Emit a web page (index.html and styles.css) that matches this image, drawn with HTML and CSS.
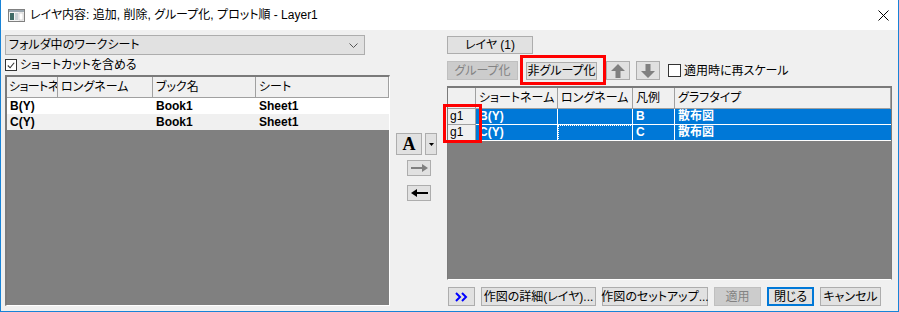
FILE: index.html
```html
<!DOCTYPE html>
<html lang="ja">
<head>
<meta charset="utf-8">
<title>レイヤ内容</title>
<link rel="stylesheet" href="styles.css">
</head>
<body>
<div class="window">
  <div class="titlebar">
    <svg class="app-icon" width="17" height="13" viewBox="0 0 17 13">
      <rect x="0.5" y="0.5" width="16" height="12" fill="#f4f4f4" stroke="#808080"/>
      <rect x="1" y="1" width="15" height="2" fill="#9aa7b0"/>
      <rect x="2" y="4" width="4" height="7" fill="#3f6b66"/>
      <rect x="7" y="4" width="3" height="7" fill="#c9d2d6"/>
      <rect x="11" y="4" width="4" height="7" fill="#ffffff" stroke="#b5b5b5" stroke-width="0.5"/>
    </svg>
    <span class="title">レイヤ内容: 追加, 削除, グループ化, プロット順 - Layer1</span>
    <svg class="close" width="11" height="11" viewBox="0 0 11 11">
      <path d="M0.5 0.5 L10.5 10.5 M10.5 0.5 L0.5 10.5" stroke="#000" stroke-width="1" fill="none"/>
    </svg>
  </div>

  <div class="content">
    <div class="left">
      <div class="combo">
        <span>フォルダ中のワークシート</span>
        <svg width="9" height="5" viewBox="0 0 9 5"><path d="M0.5 0.5 L4.5 4.5 L8.5 0.5" stroke="#555" fill="none"/></svg>
      </div>
      <div class="check-row">
        <span class="checkbox"><svg width="11" height="11" viewBox="0 0 11 11"><path d="M2 5.5 L4.5 8 L9 2.5" stroke="#333" stroke-width="1.2" fill="none"/></svg></span>
        <span>ショートカットを含める</span>
      </div>
      <div class="list">
        <div class="lrow lhead">
          <div class="hcell tight">ショートネ</div>
          <div class="hcell">ロングネーム</div>
          <div class="hcell">ブック名</div>
          <div class="hcell">シート</div>
        </div>
        <div class="lrow ldata">
          <div class="dcell">B(Y)</div>
          <div class="dcell"></div>
          <div class="dcell">Book1</div>
          <div class="dcell">Sheet1</div>
        </div>
        <div class="lrow ldata alt">
          <div class="dcell">C(Y)</div>
          <div class="dcell"></div>
          <div class="dcell">Book1</div>
          <div class="dcell">Sheet1</div>
        </div>
      </div>
    </div>

    <div class="middle">
      <div class="font-row">
        <div class="btn font-btn">A</div>
        <div class="btn dd-btn"><svg width="5" height="3" viewBox="0 0 5 3"><path d="M0 0 H5 L2.5 3 Z" fill="#000"/></svg></div>
      </div>
      <div class="btn arrow-btn first">
        <svg width="17" height="8" viewBox="0 0 17 8"><path d="M0 3 H11 V0 L17 4 L11 8 V5 H0 Z" fill="#808080"/></svg>
      </div>
      <div class="btn arrow-btn">
        <svg width="17" height="8" viewBox="0 0 17 8"><path d="M17 3 H6 V0 L0 4 L6 8 V5 H17 Z" fill="#000"/></svg>
      </div>
    </div>

    <div class="right">
      <div class="btn tab-btn">レイヤ (1)</div>
      <div class="tool-row">
        <div class="btn disabled group-btn">グループ化</div>
        <div class="btn ungroup-btn">非グループ化</div>
        <div class="btn move-btn"><svg width="14" height="14" viewBox="0 0 14 14"><path d="M7 0 L14 7 H9.5 V14 H4.5 V7 H0 Z" fill="#808080"/></svg></div>
        <div class="btn move-btn down"><svg width="14" height="14" viewBox="0 0 14 14"><path d="M7 14 L14 7 H9.5 V0 H4.5 V7 H0 Z" fill="#808080"/></svg></div>
        <span class="checkbox empty"></span>
        <span class="check-label">適用時に再スケール</span>
      </div>
      <div class="list rlist">
        <div class="rrow rhead">
          <div class="hcell"></div>
          <div class="hcell">ショートネーム</div>
          <div class="hcell">ロングネーム</div>
          <div class="hcell">凡例</div>
          <div class="hcell">グラフタイプ</div>
        </div>
        <div class="rrow rdata">
          <div class="gcell">g1</div>
          <div class="scell">B(Y)</div>
          <div class="scell"></div>
          <div class="scell">B</div>
          <div class="scell">散布図</div>
        </div>
        <div class="rrow rdata">
          <div class="gcell">g1</div>
          <div class="scell">C(Y)</div>
          <div class="scell focus"></div>
          <div class="scell">C</div>
          <div class="scell">散布図</div>
        </div>
      </div>
      <div class="bottom-row">
        <div class="btn more-btn"><svg width="13" height="10" viewBox="0 0 13 10"><path d="M1 1 L5 5 L1 9 M7 1 L11 5 L7 9" stroke="#0000ff" stroke-width="2" fill="none"/></svg></div>
        <div class="btn w115">作図の詳細(レイヤ)...</div>
        <div class="btn w106">作図のセットアップ...</div>
        <div class="btn disabled w47">適用</div>
        <div class="btn default w47">閉じる</div>
        <div class="btn w61">キャンセル</div>
      </div>
    </div>
  </div>

  <div class="mark mark-ungroup"></div>
  <div class="mark mark-g1"></div>
</div>
</body>
</html>
```

FILE: styles.css
```css
* { box-sizing: border-box; }

body {
  margin: 0;
  font-family: "Liberation Sans", "Noto Sans CJK JP", sans-serif;
  font-size: 12px;
  font-feature-settings: "palt";
  color: #000;
  background: #fff;
}

.window {
  position: relative;
  width: 899px;
  height: 312px;
  border: 1px solid #1883d7;
  border-top: none;
  background: #f0f0f0;
  display: flex;
  flex-direction: column;
  overflow: hidden;
}

.titlebar {
  height: 30px;
  flex: none;
  background: #fff;
  display: flex;
  align-items: center;
}

.app-icon { margin-left: 7px; flex: none; }

.title {
  margin-left: 5px;
  font-size: 12px;
  line-height: 16px;
  white-space: nowrap;
}

.close { margin-left: auto; margin-right: 9px; flex: none; }

.content {
  flex: 1;
  display: flex;
  padding: 5px 0 5px 4px;
}

/* left column */
.left {
  width: 385px;
  display: flex;
  flex-direction: column;
}

.combo {
  width: 360px;
  height: 20px;
  border: 1px solid #adadad;
  background: #e1e1e1;
  display: flex;
  align-items: center;
  justify-content: space-between;
  padding: 0 6px 0 3px;
  line-height: 16px;
}

.check-row {
  height: 20px;
  display: flex;
  align-items: center;
  gap: 3px;
  line-height: 16px;
}

.checkbox {
  width: 12px;
  height: 12px;
  border: 1px solid #333;
  background: #fff;
  display: flex;
  align-items: center;
  justify-content: center;
  flex: none;
}

.list {
  flex: 1;
  background: #808080;
  border-style: solid;
  border-width: 2px 1px 1px 2px;
  border-color: #7a7a7a #ffffff #ffffff #7a7a7a;
  overflow: hidden;
}

.lrow {
  display: grid;
  grid-template-columns: 51px 95px 103px 1fr;
}

.hcell {
  height: 21px;
  background: #f0f0f0;
  border-right: 1px solid #a0a0a0;
  border-bottom: 1px solid #a0a0a0;
  padding-left: 3px;
  line-height: 20px;
  white-space: nowrap;
  overflow: hidden;
}

.hcell.tight {
  padding-left: 2px;
  letter-spacing: -0.6px;
}

.ldata { background: #fff; }
.ldata.alt { background: #f0f0f0; }

.dcell {
  height: 16px;
  line-height: 16px;
  padding-left: 3px;
  font-weight: bold;
  white-space: nowrap;
  overflow: hidden;
}

/* middle column */
.middle {
  width: 42px;
  margin-left: 6px;
  padding-top: 98px;
  display: flex;
  flex-direction: column;
  align-items: flex-start;
}

.btn {
  height: 19px;
  border: 1px solid #adadad;
  background: #e1e1e1;
  display: flex;
  align-items: center;
  justify-content: center;
  line-height: 16px;
  white-space: nowrap;
  flex: none;
}

.btn.disabled {
  background: #cccccc;
  border-color: #bfbfbf;
  color: #838383;
}

.btn.default {
  border: 2px solid #0078d7;
}

.font-row {
  display: flex;
  gap: 3px;
}

.font-btn {
  width: 26px;
  height: 22px;
  font-family: "Liberation Serif", serif;
  font-weight: bold;
  font-size: 18px;
  line-height: 20px;
}

.dd-btn {
  width: 12px;
  height: 22px;
}

.arrow-btn {
  width: 24px;
  height: 16px;
  margin-left: 11px;
  margin-top: 9px;
}

.arrow-btn.first { margin-top: 5px; }

/* right column */
.right {
  width: 445px;
  margin-left: 9px;
  margin-top: 1px;
  display: flex;
  flex-direction: column;
}

.tab-btn {
  width: 86px;
  height: 18px;
}

.tool-row {
  margin-top: 6px;
  height: 20px;
  display: flex;
  align-items: flex-end;
}

.group-btn { width: 71px; }
.ungroup-btn { width: 71px; margin-left: 8px; height: 18px; }
.move-btn { width: 24px; margin-left: 9px; }
.move-btn.down { margin-left: 6px; }

.tool-row .checkbox { margin-left: 8px; margin-bottom: 3px; width: 13px; height: 13px; }
.check-label { margin-left: 3px; margin-bottom: 1px; line-height: 16px; }

.rlist {
  margin-top: 6px;
  border-width: 2px 1px 1px 1px;
  border-color: #7a7a7a #7a7a7a #ffffff #7a7a7a;
}

.rrow {
  display: grid;
  grid-template-columns: 28px 82px 75px 42px 1fr;
}

.rdata .gcell {
  height: 16px;
  background: #f0f0f0;
  border-right: 1px solid #a0a0a0;
  border-bottom: 1px solid #a0a0a0;
  line-height: 15px;
  padding-left: 2px;
  font-family: "Liberation Sans", sans-serif;
}

.scell {
  height: 16px;
  background: #0078d7;
  color: #fff;
  font-weight: bold;
  border-right: 1px solid #fff;
  border-bottom: 1px solid #fff;
  line-height: 15px;
  padding-left: 3px;
  white-space: nowrap;
}

.scell:last-child { border-right: none; }

.scell.focus {
  outline: 1px dotted #fff;
  outline-offset: -1px;
}

.bottom-row {
  margin-top: 7px;
  margin-left: 1px;
  height: 19px;
  display: flex;
  gap: 6px;
}

.more-btn { width: 27px; }
.w115 { width: 115px; }
.w106 { width: 106px; }
.w47 { width: 47px; }
.w61 { width: 61px; }

/* annotation marks */
.mark {
  position: absolute;
  border: 3px solid #ff0000;
}

.mark-ungroup {
  left: 519px;
  top: 55px;
  width: 86px;
  height: 30px;
}

.mark-g1 {
  left: 442px;
  top: 104px;
  width: 39px;
  height: 39px;
}
```
